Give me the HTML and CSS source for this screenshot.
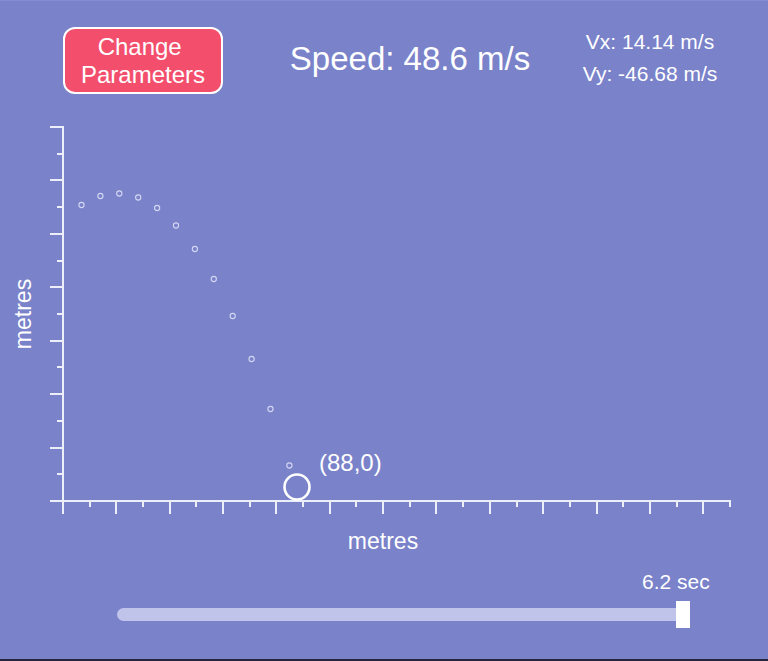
FILE: index.html
```html
<!DOCTYPE html>
<html lang="en">
<head>
<meta charset="utf-8">
<title>Projectile</title>
<link rel="stylesheet" href="styles.css">
</head>
<body>
<div class="app">
  <header class="top">
    <button class="change-btn" type="button">Change&nbsp;<br>Parameters</button>
    <div class="speed">Speed: 48.6 m/s</div>
    <div class="velocities">
      <div>Vx: 14.14 m/s</div>
      <div>Vy: -46.68 m/s</div>
    </div>
  </header>

  <svg class="chart" width="768" height="450" viewBox="0 110 768 450" xmlns="http://www.w3.org/2000/svg">
    <g class="axis">
      <path d="M63 126 V514 M50 501 H731"/>
      <path d="M50 127 H63 M50 180 H63 M50 234 H63 M50 287 H63 M50 341 H63 M50 394 H63 M50 448 H63"/>
      <path d="M57 154 H63 M57 207 H63 M57 261 H63 M57 314 H63 M57 367 H63 M57 421 H63 M57 474 H63"/>
      <path d="M116 501 V514 M170 501 V514 M223 501 V514 M276 501 V514 M330 501 V514 M383 501 V514 M436 501 V514 M490 501 V514 M543 501 V514 M597 501 V514 M650 501 V514 M703 501 V514"/>
      <path d="M90 501 V507 M143 501 V507 M196 501 V507 M250 501 V507 M303 501 V507 M356 501 V507 M410 501 V507 M463 501 V507 M517 501 V507 M570 501 V507 M623 501 V507 M677 501 V507 M730 501 V507"/>
    </g>
    <g class="trail">
      <circle cx="81.5" cy="205" r="2.6"/>
      <circle cx="100.4" cy="196" r="2.6"/>
      <circle cx="119.3" cy="193.5" r="2.6"/>
      <circle cx="138.2" cy="197.5" r="2.6"/>
      <circle cx="157.1" cy="208" r="2.6"/>
      <circle cx="176" cy="225.5" r="2.6"/>
      <circle cx="194.9" cy="249" r="2.6"/>
      <circle cx="213.8" cy="279" r="2.6"/>
      <circle cx="232.7" cy="316" r="2.6"/>
      <circle cx="251.6" cy="359" r="2.6"/>
      <circle cx="270.5" cy="409" r="2.6"/>
      <circle cx="289.4" cy="465.5" r="2.6"/>
    </g>
    <circle class="ball" cx="297" cy="487" r="12.5"/>
    <text class="coord" x="319" y="471">(88,0)</text>
    <text class="axis-label" x="383" y="549" text-anchor="middle">metres</text>
    <text class="axis-label" x="0" y="0" text-anchor="middle" transform="translate(31 314) rotate(-90)">metres</text>
  </svg>

  <section class="timeline">
    <div class="time-label">6.2 sec</div>
    <div class="slider">
      <div class="track"></div>
      <div class="thumb" style="left: 559px"></div>
    </div>
  </section>
  <div class="bottom-edge"></div>
</div>
</body>
</html>
```

FILE: styles.css
```css
html, body {
  margin: 0;
  padding: 0;
}

body {
  background: #7a82ca;
  font-family: "Liberation Sans", Arial, sans-serif;
  color: #ffffff;
}

.app {
  width: 768px;
  height: 661px;
  overflow: hidden;
  display: flex;
  flex-direction: column;
  background: #7a82ca;
  border-top: 1px solid #858cd0;
  box-sizing: border-box;
}

.top {
  height: 109px;
  display: flex;
  align-items: flex-start;
  flex-shrink: 0;
}

.change-btn {
  margin: 26px 0 0 63px;
  width: 160px;
  height: 67px;
  box-sizing: border-box;
  border: 2px solid #ffffff;
  border-radius: 12px;
  background: #f44e6d;
  color: #ffffff;
  font-family: "Liberation Sans", Arial, sans-serif;
  font-size: 24px;
  line-height: 28px;
  padding: 0;
  text-align: center;
  cursor: pointer;
}

.speed {
  margin: 41px 0 0 57px;
  width: 260px;
  text-align: center;
  font-size: 33px;
  line-height: 33px;
  white-space: nowrap;
}

.velocities {
  margin: 25px 0 0 30px;
  width: 160px;
  text-align: center;
  font-size: 21px;
  line-height: 32px;
  white-space: nowrap;
}

.chart {
  display: block;
  flex-shrink: 0;
}

.axis path {
  fill: none;
  stroke: #eceefa;
  stroke-width: 2;
}

.trail circle {
  fill: none;
  stroke: #d4d7f2;
  stroke-width: 1.1;
}

.ball {
  fill: none;
  stroke: #ffffff;
  stroke-width: 2.6;
}

.coord {
  fill: #ffffff;
  font-family: "Liberation Sans", Arial, sans-serif;
  font-size: 24px;
}

.axis-label {
  fill: #ffffff;
  font-family: "Liberation Sans", Arial, sans-serif;
  font-size: 23px;
}

.timeline {
  height: 99px;
  flex-shrink: 0;
  padding-top: 10px;
  box-sizing: border-box;
}

.time-label {
  padding-left: 642px;
  font-size: 21px;
  line-height: 24px;
  white-space: nowrap;
}

.slider {
  position: relative;
  margin: 7px 0 0 117px;
  width: 573px;
  height: 27px;
  display: flex;
  align-items: center;
}

.track {
  width: 566px;
  height: 13px;
  border-radius: 7px 0 0 7px;
  background: #c0c4ea;
}

.thumb {
  position: absolute;
  top: 0;
  width: 14px;
  height: 27px;
  background: #ffffff;
}

.bottom-edge {
  height: 2px;
  background: #24263e;
  margin-top: auto;
}
```
